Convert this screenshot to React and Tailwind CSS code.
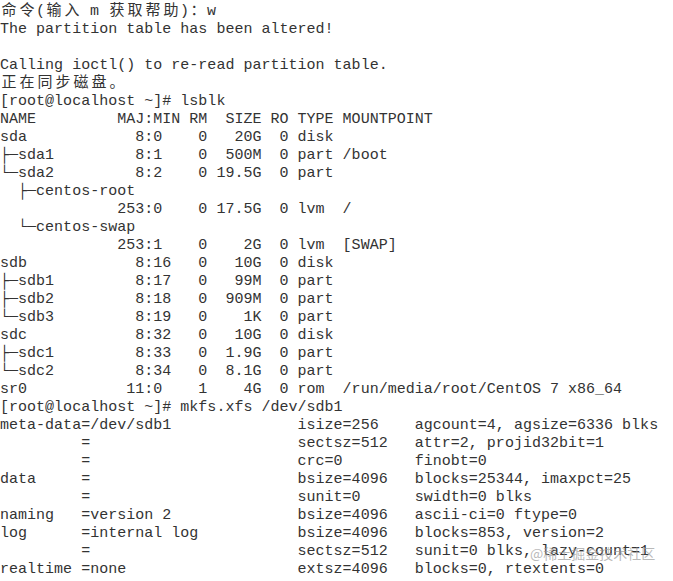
const lsblkRow = (name, maj, min, rm, size, ro, type, mp = '') =>
  name.padEnd(13) +
  maj.padStart(3) + ':' + min.padEnd(3) + ' ' +
  rm.padStart(2) + ' ' +
  size.padStart(5) + ' ' +
  ro.padStart(2) + ' ' +
  type.padEnd(4) + ' ' + mp

const LINES = [
  '命令(输入 m 获取帮助)：w',
  'The partition table has been altered!',
  '',
  'Calling ioctl() to re-read partition table.',
  '正在同步磁盘。',
  '[root@localhost ~]# lsblk',
  'NAME         MAJ:MIN RM  SIZE RO TYPE MOUNTPOINT',
  lsblkRow('sda', '8', '0', '0', '20G', '0', 'disk'),
  lsblkRow('├─sda1', '8', '1', '0', '500M', '0', 'part', '/boot'),
  lsblkRow('└─sda2', '8', '2', '0', '19.5G', '0', 'part'),
  '  ├─centos-root',
  lsblkRow('', '253', '0', '0', '17.5G', '0', 'lvm', '/'),
  '  └─centos-swap',
  lsblkRow('', '253', '1', '0', '2G', '0', 'lvm', '[SWAP]'),
  lsblkRow('sdb', '8', '16', '0', '10G', '0', 'disk'),
  lsblkRow('├─sdb1', '8', '17', '0', '99M', '0', 'part'),
  lsblkRow('├─sdb2', '8', '18', '0', '909M', '0', 'part'),
  lsblkRow('└─sdb3', '8', '19', '0', '1K', '0', 'part'),
  lsblkRow('sdc', '8', '32', '0', '10G', '0', 'disk'),
  lsblkRow('├─sdc1', '8', '33', '0', '1.9G', '0', 'part'),
  lsblkRow('└─sdc2', '8', '34', '0', '8.1G', '0', 'part'),
  lsblkRow('sr0', '11', '0', '1', '4G', '0', 'rom', '/run/media/root/CentOS 7 x86_64'),
  '[root@localhost ~]# mkfs.xfs /dev/sdb1',
  'meta-data=/dev/sdb1              isize=256    agcount=4, agsize=6336 blks',
  '         =                       sectsz=512   attr=2, projid32bit=1',
  '         =                       crc=0        finobt=0',
  'data     =                       bsize=4096   blocks=25344, imaxpct=25',
  '         =                       sunit=0      swidth=0 blks',
  'naming   =version 2              bsize=4096   ascii-ci=0 ftype=0',
  'log      =internal log           bsize=4096   blocks=853, version=2',
  '         =                       sectsz=512   sunit=0 blks, lazy-count=1',
  'realtime =none                   extsz=4096   blocks=0, rtextents=0',
]

// CJK and full-width punctuation take two terminal cells
const isWide = (ch) => ch.charCodeAt(0) >= 0x2e80

function TermLine({ text }) {
  return (
    <div className="h-[18px] leading-[18px] whitespace-pre">
      {Array.from(text).map((ch, i) =>
        isWide(ch) ? (
          <span key={i} className="inline-block w-[18px] text-center">{ch}</span>
        ) : (
          ch
        )
      )}
    </div>
  )
}

export default function App() {
  return (
    <div className="relative w-[673px] h-[581px] overflow-hidden bg-white pt-[3px] text-[#333] text-[15px] font-['Liberation_Mono','DejaVu_Sans_Mono','Noto_Sans_CJK_SC',monospace]">
      {LINES.map((line, i) => (
        <TermLine key={i} text={line} />
      ))}

      {/* watermark */}
      <div className="absolute left-[530px] top-[544px] text-[14px] leading-[18px] text-[#9a9a9a]/70 font-['Noto_Sans_CJK_SC',sans-serif]">
        @稀土掘金技术社区
      </div>
    </div>
  )
}
